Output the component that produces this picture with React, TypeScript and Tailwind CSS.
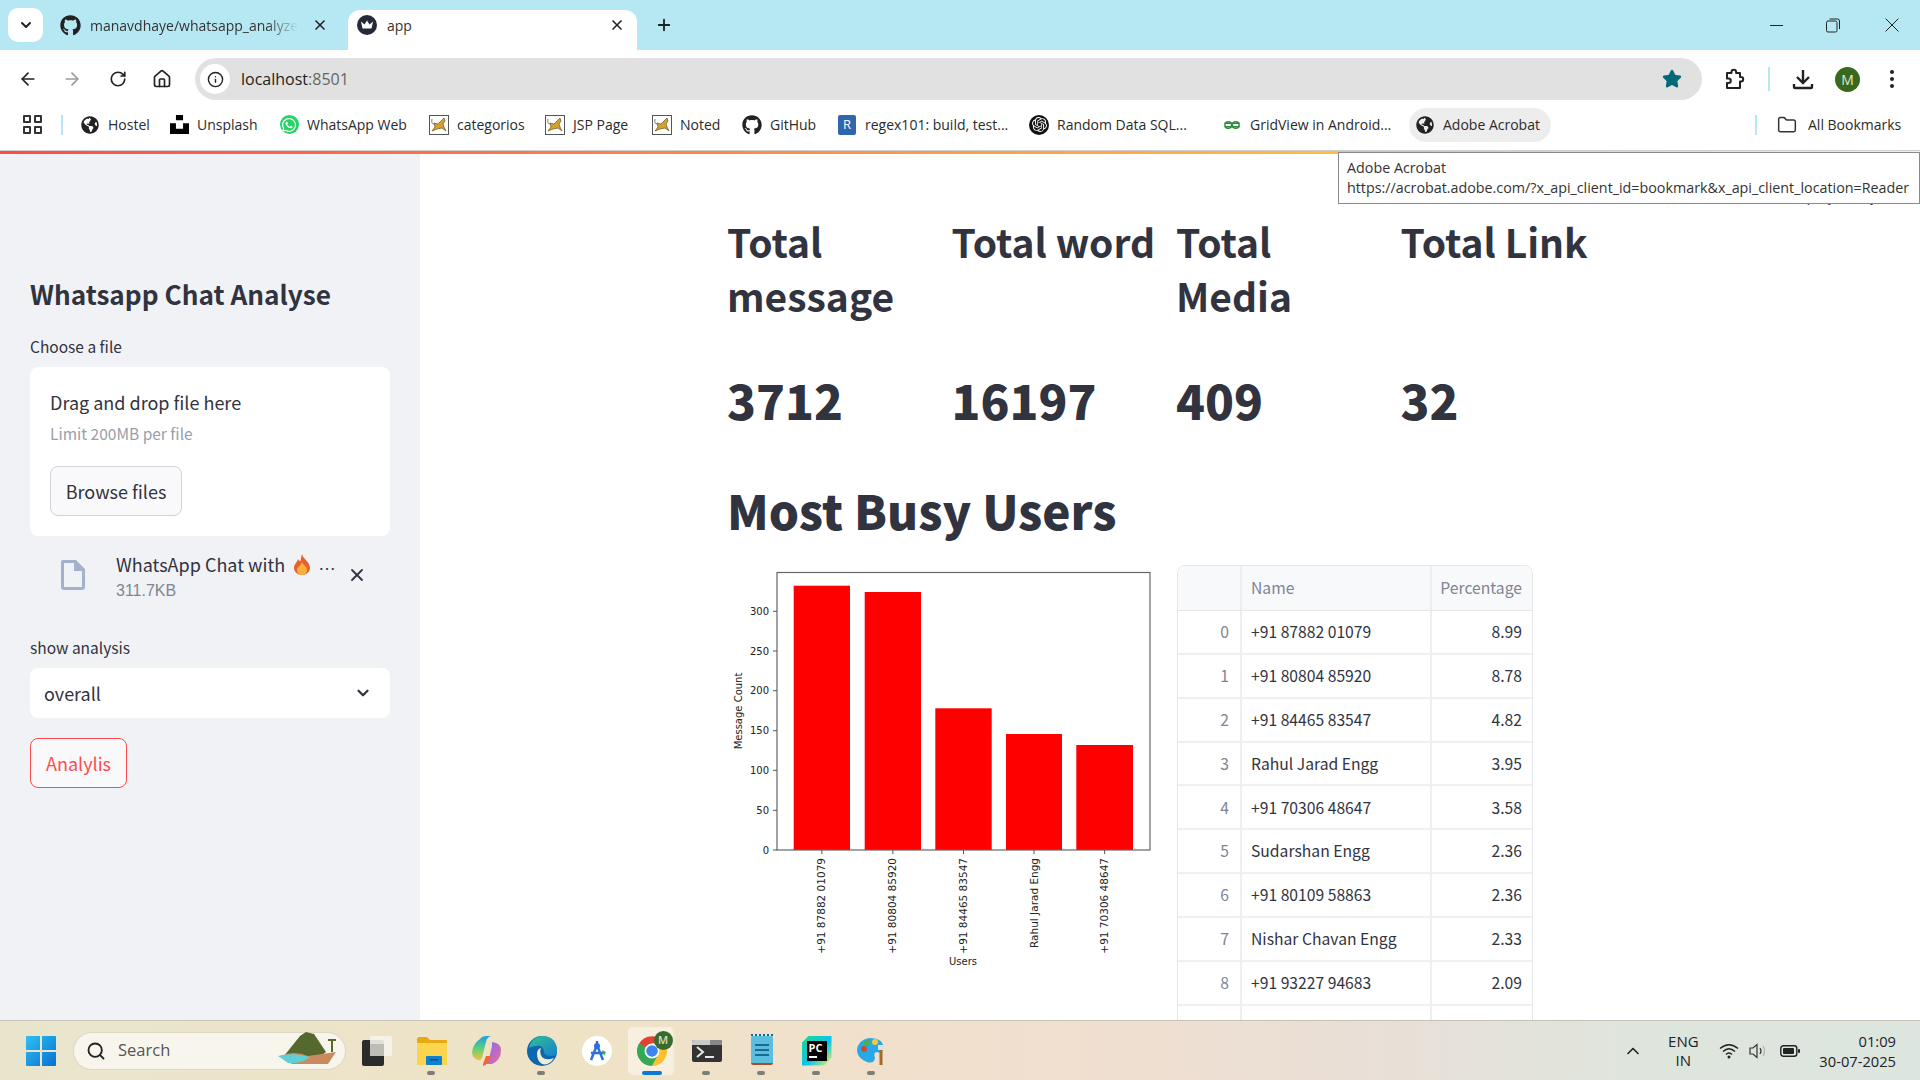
import { ArrowLeft, ArrowRight, RotateCw, House, Info, Star, X, ChevronDown, ChevronUp, Plus, Folder, Search } from "lucide-react";
import { FaGithub, FaGlobeAmericas, FaWhatsapp } from "react-icons/fa";
import { SiUnsplash, SiOpenai } from "react-icons/si";

const st = "font-['Noto_Sans_CJK_SC','Noto_Sans',sans-serif]";
const ui = "font-['Open_Sans','Noto_Sans',sans-serif]";

function Crown() {
  return (
    <svg width="20" height="20" viewBox="0 0 20 20">
      <circle cx="10" cy="10" r="10" fill="#252a3a" />
      <path d="M4 6.5 L7.5 9.5 L10 5.5 L12.500 9.500 L16 6.500 L14.500 13.500 L5.500 13.500Z" fill="#fff" />
    </svg>
  );
}

function Tomcat() {
  return (
    <svg width="20" height="20" viewBox="0 0 20 20">
      <rect x="0.500" y="0.500" width="19" height="19" fill="#fff" stroke="#555" />
      <path d="M3 16 L6 12 L5 8 L9 9 L13 5 L15 3 L16 6 L14 9 L15 12 L17 16 L13 13 L8 14Z" fill="#d4a02f" stroke="#6b5320" strokeWidth="0.700" />
      <path d="M3 4 Q2 9 5 9" fill="none" stroke="#777" />
    </svg>
  );
}

function Bookmark({ w, icon, label, extra = "" }: { w: string; icon: React.ReactNode; label: string; extra?: string }) {
  return (
    <div className={`flex items-center gap-[8px] shrink-0 ${w} ${extra}`}>
      <span className="w-[20px] h-[20px] flex items-center justify-center shrink-0">{icon}</span>
      <span className="text-[14px] text-[#2b2b2b] whitespace-nowrap">{label}</span>
    </div>
  );
}

function TabBar() {
  return (
    <div className={`h-[50px] bg-[#b6e8f4] flex items-stretch shrink-0 relative ${ui}`}>
      <div className="ml-[8px] mt-[8px] w-[35px] h-[34px] bg-white rounded-[10px] flex items-center justify-center">
        <ChevronDown size={16} strokeWidth={3} className="text-[#222]" />
      </div>
      <div className="flex items-center w-[305px] pl-[17px] shrink-0">
        <FaGithub size={21} className="text-[#222]" />
        <span className="ml-[9px] w-[208px] overflow-hidden whitespace-nowrap text-[14px] text-[#333] [mask-image:linear-gradient(to_right,black_85%,transparent)]">manavdhaye/whatsapp_analyzer</span>
        <X size={16} strokeWidth={2.500} className="ml-[14px] text-[#222]" />
      </div>
      <div className="mt-[10px] w-[289px] bg-white rounded-t-[12px] flex items-center pl-[9px] pb-[10px] shrink-0 relative">
        <Crown />
        <span className="ml-[10px] text-[14px] text-[#333] flex-1">app</span>
        <X size={16} strokeWidth={2.500} className="mr-[12px] text-[#222]" />
      </div>
      <div className="ml-[18px] flex items-center">
        <Plus size={18} strokeWidth={2.500} className="text-[#222]" />
      </div>
      <div className="ml-auto flex items-center pr-[21px]">
        <div className="w-[13px] h-[1px] bg-[#222]" />
        <svg width="14" height="15" viewBox="0 0 14 15" fill="none" stroke="#222" className="ml-[43px]"><rect x="0.500" y="3" width="10.500" height="11" rx="1.500" /><path d="M3.500 1 H11.500 Q13.500 1 13.500 3 V11" /></svg>
        <svg width="14" height="14" viewBox="0 0 14 14" stroke="#222" className="ml-[45px]"><path d="M0.500 0.500 L13.500 13.500 M13.500 0.500 L0.500 13.500" /></svg>
      </div>
    </div>
  );
}

function Toolbar() {
  return (
    <div className={`h-[50px] pt-[8px] bg-white rounded-t-[10px] flex items-center shrink-0 relative ${ui}`}>
      <div className="w-[195px] flex items-center shrink-0 text-[#222]">
        <ArrowLeft size={20} strokeWidth={2} className="ml-[18px]" />
        <ArrowRight size={20} strokeWidth={2} className="ml-[24px] text-[#9a9a9a]" />
        <RotateCw size={18} strokeWidth={2.200} className="ml-[27px]" />
        <House size={20} strokeWidth={2} className="ml-[25px]" />
      </div>
      <div className="w-[1507px] h-[42px] bg-[#e1e1e1] rounded-full flex items-center pl-[5px] pr-[20px]">
        <div className="w-[30px] h-[30px] bg-white rounded-full flex items-center justify-center">
          <Info size={17} strokeWidth={2} className="text-[#222]" />
        </div>
        <span className="ml-[11px] text-[16px] text-[#222]">localhost<span className="text-[#666]">:8501</span></span>
        <Star size={20} fill="#006a7a" stroke="#006a7a" className="ml-auto" />
      </div>
      <div className="flex items-center flex-1 text-[#222] pl-[22px]">
        <svg width="21" height="22" viewBox="0 0 21 22" fill="none" stroke="#222" strokeWidth="2" strokeLinejoin="round">
          <path d="M3 5 H7.500 V4 a2.300 2.300 0 0 1 4.600 0 V5 H16 V9 H17 a2.200 2.200 0 0 1 0 4.400 H16 V20 H3 V15 H4.500 a2.300 2.300 0 0 0 0 -4.600 H3 Z" />
        </svg>
        <div className="ml-[23px] w-[2px] h-[24px] bg-[#b6e8f4]" />
        <svg width="22" height="22" viewBox="0 0 22 22" fill="none" stroke="#222" strokeWidth="2.400" className="ml-[22px]">
          <path d="M11 2 V14 M5 9 L11 15 L17 9" />
          <path d="M2 16 V19 Q2 20 3 20 H19 Q20 20 20 19 V16" />
        </svg>
        <div className="ml-[21px] w-[25px] h-[25px] rounded-full bg-[#38691f] text-[#e0e8d8] text-[14px] flex items-center justify-center">M</div>
        <svg width="4" height="20" viewBox="0 0 4 20" className="ml-[30px]" fill="#222"><circle cx="2" cy="3" r="2" /><circle cx="2" cy="10" r="2" /><circle cx="2" cy="17" r="2" /></svg>
      </div>
    </div>
  );
}

function BookmarksBar() {
  return (
    <div className={`h-[51px] pb-[1px] bg-white flex items-center shrink-0 border-b border-[#cfcfcf] ${ui}`}>
      <div className="ml-[23px] grid grid-cols-2 gap-[3px] shrink-0">
        <div className="w-[8px] h-[8px] border-2 border-[#333] rounded-[1px]" />
        <div className="w-[8px] h-[8px] border-2 border-[#333] rounded-[1px]" />
        <div className="w-[8px] h-[8px] border-2 border-[#333] rounded-[1px]" />
        <div className="w-[8px] h-[8px] border-2 border-[#333] rounded-[1px]" />
      </div>
      <div className="ml-[19px] mr-[17px] w-[2px] h-[20px] bg-[#b6e8f4] shrink-0" />
      <Bookmark w="w-[89px]" icon={<FaGlobeAmericas size={18} className="text-[#222]" />} label="Hostel" />
      <Bookmark w="w-[110px]" icon={<SiUnsplash size={19} className="text-black" />} label="Unsplash" />
      <Bookmark w="w-[150px]" icon={<span className="w-[19px] h-[19px] rounded-full bg-[#25d366] flex items-center justify-center"><FaWhatsapp size={16} className="text-white" /></span>} label="WhatsApp Web" />
      <Bookmark w="w-[116px]" icon={<Tomcat />} label="categorios" />
      <Bookmark w="w-[107px]" icon={<Tomcat />} label="JSP Page" />
      <Bookmark w="w-[90px]" icon={<Tomcat />} label="Noted" />
      <Bookmark w="w-[95px]" icon={<FaGithub size={20} className="text-[#222]" />} label="GitHub" />
      <Bookmark w="w-[192px]" icon={<span className="w-[18px] h-[20px] bg-[#2f66ad] text-white text-[13px] flex items-center justify-center rounded-[2px]">R</span>} label="regex101: build, test..." />
      <Bookmark w="w-[193px]" icon={<span className="w-[20px] h-[20px] rounded-full bg-[#111] flex items-center justify-center"><SiOpenai size={15} className="text-white" /></span>} label="Random Data SQL..." />
      <Bookmark w="w-[187px]" icon={<svg width="18" height="10" viewBox="0 0 20 12" fill="none" stroke="#2e8b3d" strokeWidth="1.800"><path d="M1 4 H19 M1 8 H19" /><circle cx="5.500" cy="6" r="4" /><circle cx="14.500" cy="6" r="4" /></svg>} label="GridView in Android..." />
      <Bookmark w="w-[142px]" extra="h-[34px] bg-[#ededed] rounded-full pl-[6px]" icon={<FaGlobeAmericas size={18} className="text-[#222]" />} label="Adobe Acrobat" />
      <div className="ml-[204px] w-[2px] h-[20px] bg-[#b6e8f4] shrink-0" />
      <Folder size={20} strokeWidth={1.800} className="ml-[20px] text-[#333] shrink-0" />
      <span className="ml-[11px] text-[14px] text-[#2b2b2b] whitespace-nowrap">All Bookmarks</span>
    </div>
  );
}

function Sidebar() {
  return (
    <aside className={`w-[420px] shrink-0 bg-[#f0f2f6] px-[30px] pt-[121px] text-[#31333f] ${st}`}>
      <h2 className="text-[26.200px] leading-[38px] font-semibold">Whatsapp Chat Analyse</h2>
      <p className="mt-[23px] text-[15.500px] leading-[20px]">Choose a file</p>
      <div className="mt-[11px] h-[169px] bg-white rounded-[8px] pl-[20px] pt-[22px]">
        <p className="text-[18px] leading-[26px]">Drag and drop file here</p>
        <p className="mt-[8px] text-[15.500px] leading-[20px] text-[#9a9ea8]">Limit 200MB per file</p>
        <button className="mt-[23px] w-[132px] h-[50px] bg-[#f9f9fb] border border-[#d2d3d6] rounded-[8px] text-[18px]">Browse files</button>
      </div>
      <div className="h-[78px] flex items-center pl-[31px] relative">
        <svg width="24" height="30" viewBox="0 0 24 30" fill="none"><path d="M2 0 H15 L24 9 V27 Q24 30 21 30 H3 Q0 30 0 27 V2 Q0 0 2 0Z M3 3 V27 H21 V11 H13 V3Z" fill="#a3b2cc" fillRule="evenodd" /><path d="M15 1 V9 H23Z" fill="#a3b2cc" /></svg>
        <div className="ml-[31px] mt-[5px]">
          <div className="flex items-center text-[18px] leading-[26px] w-[220px] whitespace-nowrap -mt-[1px]">WhatsApp Chat with <span className="ml-[9px] mr-[8px] inline-flex"><svg width="16" height="21" viewBox="0 0 16 21"><path d="M8 0 C9 5 16 8 16 14 C16 18 12 21 8 21 C4 21 0 18 0 14 C0 10 3 9 4 5 C5 7 6 7 6.500 7 C7 5 7 3 8 0Z" fill="#e8612c" /><path d="M8 8 C9 11 13 12 13 16 C13 19 10 21 8 21 C6 21 3 19 3 16 C3 13 7 12 8 8Z" fill="#fbb03b" /></svg></span><span className="font-['Liberation_Sans',sans-serif]">…</span></div>
          <div className="text-[16px] leading-[24px] text-[#808495] font-['Liberation_Sans',sans-serif] mt-[2px]">311.7KB</div>
        </div>
        <X size={20} strokeWidth={2.200} className="absolute left-[317px] top-[29px] text-[#31333f]" />
      </div>
      <p className="mt-[23px] text-[15.500px] leading-[20px]">show analysis</p>
      <div className="mt-[11px] h-[50px] bg-white rounded-[8px] flex items-center pl-[14px] pr-[18px] justify-between">
        <span className="text-[18px]">overall</span>
        <ChevronDown size={18} strokeWidth={3} />
      </div>
      <button className="mt-[20px] w-[97px] h-[50px] bg-[#f9f9fb] border border-[#ff4b4b] rounded-[8px] text-[18px] text-[#ff4b4b]">Analylis</button>
    </aside>
  );
}

const metrics = [
  { t: "Total message", v: "3712" },
  { t: "Total word", v: "16197" },
  { t: "Total Media", v: "409" },
  { t: "Total Link", v: "32" },
];

const rows = [
  ["0", "+91 87882 01079", "8.99"],
  ["1", "+91 80804 85920", "8.78"],
  ["2", "+91 84465 83547", "4.82"],
  ["3", "Rahul Jarad Engg", "3.95"],
  ["4", "+91 70306 48647", "3.58"],
  ["5", "Sudarshan Engg", "2.36"],
  ["6", "+91 80109 58863", "2.36"],
  ["7", "Nishar Chavan Engg", "2.33"],
  ["8", "+91 93227 94683", "2.09"],
  ["", "", ""],
];

function Chart() {
  const xs = [
    [793.7, 56.3, 585.7, "+91 87882 01079"],
    [864.7, 56.3, 592, "+91 80804 85920"],
    [935.3, 56.4, 708.3, "+91 84465 83547"],
    [1006, 56, 734, "Rahul Jarad Engg"],
    [1076.3, 56.7, 745, "+91 70306 48647"],
  ] as const;
  const ticks = [[0, 850], [50, 810.3], [100, 770.3], [150, 730.7], [200, 690.7], [250, 651], [300, 611.3]];
  return (
    <svg viewBox="727 565 433 440" className="w-[433px] h-[440px] font-['DejaVu_Sans',sans-serif]">
      {xs.map(([x, w, top]) => (
        <rect key={x} x={x} y={top} width={w} height={850 - top} fill="#ff0000" />
      ))}
      <rect x="777" y="572.500" width="373" height="277.500" fill="none" stroke="#666" strokeWidth="1.200" />
      {ticks.map(([n, y]) => (
        <g key={n}>
          <line x1="773" x2="777" y1={y} y2={y} stroke="#555" />
          <text x="769" y={y + 3.500} textAnchor="end" fontSize="10" fill="#222">{n}</text>
        </g>
      ))}
      {xs.map(([x, w, , name]) => {
        const c = x + w / 2;
        return (
          <g key={name}>
            <line x1={c} x2={c} y1="850" y2="854" stroke="#555" />
            <text transform={`translate(${c + 3.500} 858) rotate(-90)`} textAnchor="end" fontSize="10.500" fill="#222">{name}</text>
          </g>
        );
      })}
      <text x="963" y="965" textAnchor="middle" fontSize="10" fill="#222">Users</text>
      <text transform="translate(742 711) rotate(-90)" textAnchor="middle" fontSize="10" fill="#222">Message Count</text>
    </svg>
  );
}

function DataTable() {
  return (
    <div className="w-[356px] border border-[#e6e7ea] rounded-t-[8px] overflow-hidden text-[15.700px]">
      <div className="flex h-[45px] bg-[#f8f9fb] border-b border-[#e6e7ea] text-[#808495]">
        <div className="w-[64px] border-r-2 border-[#eceef0]" />
        <div className="w-[190px] border-r-2 border-[#eceef0] pl-[9px] flex items-center">Name</div>
        <div className="flex-1 pr-[10px] flex items-center justify-end">Percentage</div>
      </div>
      {rows.map((r, i) => (
        <div key={i} className="flex h-[43.850px] border-b-2 border-[#eef0f2]">
          <div className="w-[64px] border-r-2 border-[#eceef0] pr-[11px] flex items-center justify-end text-[#808495]">{r[0]}</div>
          <div className="w-[190px] border-r-2 border-[#eceef0] pl-[9px] flex items-center text-[#31333f] whitespace-nowrap">{r[1]}</div>
          <div className="flex-1 pr-[10px] flex items-center justify-end text-[#31333f]">{r[2]}</div>
        </div>
      ))}
    </div>
  );
}

function Main() {
  return (
    <main className={`flex-1 bg-white overflow-hidden relative pl-[307px] pt-[60px] text-[#31333f] ${st}`}>
      <div className="absolute left-[1369px] top-[31px] text-[14px] leading-[20px] text-[#31333f]">Deploy</div>
      <div className="absolute left-[1450px] top-[48px] w-[3px] h-[3px] rounded-full bg-[#31333f]" />
      <div className="w-[882px] grid grid-cols-4 gap-x-[16px]">
        {metrics.map((m) => (
          <h3 key={m.t} className="text-[39px] leading-[54px] font-semibold h-[108px]">{m.t}</h3>
        ))}
      </div>
      <div className="mt-[48px] w-[882px] grid grid-cols-4 gap-x-[16px]">
        {metrics.map((m) => (
          <div key={m.t} className="text-[47.600px] leading-[60px] font-black">{m.v}</div>
        ))}
      </div>
      <h1 className="mt-[50px] text-[47.600px] leading-[60px] font-black whitespace-nowrap">Most Busy Users</h1>
      <div className="mt-[25px] w-[883px] grid grid-cols-[433px_356px] gap-x-[17px]">
        <Chart />
        <DataTable />
      </div>
    </main>
  );
}

function Tooltip() {
  return (
    <div className={`absolute left-[1338px] top-[152px] w-[582px] h-[52px] bg-white border border-[#8a8a8a] pl-[8px] pt-[5px] text-[14.300px] leading-[20px] text-[#333] whitespace-nowrap ${ui}`}>
      <div>Adobe Acrobat</div>
      <div>https://acrobat.adobe.com/?x_api_client_id=bookmark&amp;x_api_client_location=Reader</div>
    </div>
  );
}

function TaskIcon({ children, dot = false, active = false }: { children: React.ReactNode; dot?: boolean; active?: boolean }) {
  return (
    <div className="w-[55px] h-[60px] flex items-center justify-center relative shrink-0">
      {active && <div className="absolute left-[4px] top-[6px] w-[47px] h-[48px] bg-[#f7f0e0] rounded-[5px] border-r-2 border-[#f1e8d2]" />}
      <div className="relative">{children}</div>
      {dot && <div className="absolute left-[23px] bottom-[6px] w-[8px] h-[4px] rounded-full bg-[#7d7d78]" />}
      {active && <div className="absolute left-[18px] bottom-[6px] w-[20px] h-[4px] rounded-full bg-[#0a78d4]" />}
    </div>
  );
}

function Taskbar() {
  return (
    <div className={`h-[60px] shrink-0 border-t border-[#c4c3b5] bg-[linear-gradient(to_right,#e9e5cd,#efe3c6_30%,#f1dfcf_55%,#eadfd6_70%,#dfe5dd_85%,#dde5e0)] flex items-center relative text-[#222] ${ui}`}>
      <svg width="30" height="30" viewBox="0 0 30 30" className="ml-[26px] shrink-0">
        <defs><linearGradient id="win" x1="0" y1="0" x2="1" y2="1"><stop offset="0" stopColor="#2cc2f2" /><stop offset="1" stopColor="#0a6fd0" /></linearGradient></defs>
        <path d="M1 0 H14 V14 H0 V1Q0 0 1 0Z M16 0 H29 Q30 0 30 1 V14 H16Z M0 16 H14 V30 H1 Q0 30 0 29Z M16 16 H30 V29 Q30 30 29 30 H16Z" fill="url(#win)" />
      </svg>
      <div className="ml-[17px] w-[273px] h-[38px] rounded-full bg-[#f8f5ec] border border-[#dcd8c4] flex items-center relative shrink-0">
        <Search size={20} strokeWidth={2.200} className="ml-[12px] text-[#222]" />
        <span className="ml-[12px] text-[16.500px] text-[#555]">Search</span>
        <svg width="62" height="34" viewBox="0 0 62 34" className="absolute right-[5px] -top-[3px]">
          <path d="M6 26 L22 6 L28 2 L36 4 L48 22 L40 28Z" fill="#55682e" />
          <path d="M2 26 Q16 20 30 26 L58 22 L50 34 H14Z" fill="#c98b5e" />
          <path d="M0 26 Q16 22 32 27 Q24 34 10 33Z" fill="#5fd0d6" />
          <path d="M54 22 V10 M50 10 H58" stroke="#59692a" strokeWidth="2" />
        </svg>
      </div>
      <div className="flex ml-[3px]">
        <TaskIcon>
          <div className="w-[30px] h-[30px] relative">
            <div className="absolute left-0 bottom-0 w-[22px] h-[26px] rounded-[2px] bg-[#2b2b2b]" />
            <div className="absolute right-0 top-0 w-[22px] h-[20px] rounded-[2px] bg-[#f5f3ea]/90" />
            <div className="absolute left-[8px] top-[8px] w-[14px] h-[12px] bg-[#bdbcb5]" />
          </div>
        </TaskIcon>
        <TaskIcon dot>
          <svg width="30" height="28" viewBox="0 0 30 28">
            <path d="M0 2 Q0 0 2 0 H10 L13 3 H30 V28 H0Z" fill="#e8a913" />
            <path d="M0 6 H30 V28 H0Z" fill="#fcd54f" />
            <rect x="9" y="19" width="16" height="9" rx="1" fill="#0f80d0" />
            <rect x="13" y="22" width="8" height="1.500" fill="#0b4f8a" />
          </svg>
        </TaskIcon>
        <TaskIcon>
          <svg width="30" height="30" viewBox="0 0 30 30">
            <defs>
              <linearGradient id="cp1" x1="0" y1="0" x2="0" y2="1"><stop offset="0" stopColor="#1e9be8" /><stop offset="0.500" stopColor="#5bd07a" /><stop offset="1" stopColor="#f8c23a" /></linearGradient>
              <linearGradient id="cp2" x1="0" y1="0" x2="1" y2="1"><stop offset="0" stopColor="#7b6cf0" /><stop offset="1" stopColor="#f06a9e" /></linearGradient>
            </defs>
            <path d="M8 3 Q10 0 15 0 H19 Q15 1 14 6 L10 22 Q9 25 6 24 Q0 22 0 16 Q1 8 8 3Z" fill="url(#cp1)" />
            <path d="M20 6 Q29 7 29 14 Q29 24 20 28 H13 Q16 27 17 23 L20 10Z" fill="url(#cp2)" />
            <path d="M11 30 Q17 28 19 20 L14 20 L11 28Z" fill="#f0663a" />
          </svg>
        </TaskIcon>
        <TaskIcon dot>
          <svg width="30" height="30" viewBox="0 0 30 30">
            <defs><linearGradient id="ed" x1="0" y1="0" x2="1" y2="1"><stop offset="0" stopColor="#2fc38d" /><stop offset="1" stopColor="#1a7fd0" /></linearGradient></defs>
            <circle cx="15" cy="15" r="15" fill="#0c67b0" />
            <path d="M2 12 Q5 0 16 0 Q30 1 30 15 Q30 20 25 20 Q16 20 17 15 Q16 9 9 10 Q5 10 2 12Z" fill="url(#ed)" />
            <path d="M10 18 Q10 13 14 12 Q12 16 15 21 Q19 25 27 22 Q22 30 15 28 Q10 25 10 18Z" fill="#f2ead2" />
          </svg>
        </TaskIcon>
        <TaskIcon>
          <svg width="30" height="30" viewBox="0 0 30 30">
            <circle cx="15" cy="15" r="15" fill="#fff" />
            <path d="M15 5 V10 M9 24 L15 9 L21 24 M9 17 H21" fill="none" stroke="#2f6fd8" strokeWidth="2.500" />
            <circle cx="15" cy="10" r="3" fill="#2f6fd8" />
            <path d="M20 14 L24 16 L22 20Z" fill="#3aa85c" />
          </svg>
        </TaskIcon>
        <TaskIcon active>
          <div className="relative w-[30px] h-[30px]">
            <svg width="30" height="30" viewBox="0 0 30 30">
              <path d="M15 15 L2 8 A15 15 0 0 1 28 7.500 L15 7.500Z" fill="#e34133" />
              <path d="M2 7.500 A15 15 0 0 0 15 30 L21.500 18.700 L15 15 Z" fill="#34a853" />
              <path d="M28 7.500 A15 15 0 0 1 15 30 L21.500 18.700 L15 7.500Z" fill="#fbc02d" />
              <circle cx="15" cy="15" r="7.500" fill="#fff" />
              <circle cx="15" cy="15" r="5.800" fill="#3f83f0" />
            </svg>
            <div className="absolute -right-[6px] -top-[5px] w-[19px] h-[19px] rounded-full bg-[#3c6a2b] text-[#cfe0c3] text-[11px] font-semibold flex items-center justify-center">M</div>
          </div>
        </TaskIcon>
        <TaskIcon dot>
          <div className="w-[30px] h-[22px] rounded-[2px] bg-[#333] overflow-hidden relative">
            <div className="h-[5px] bg-[#c9c9c9] w-[18px]" />
            <div className="absolute right-0 top-0 h-[5px] w-[12px] bg-[#888]" />
            <svg width="30" height="17" viewBox="0 0 30 17" className="absolute left-0 top-[5px]"><path d="M5 2 L11 7 L5 12" fill="none" stroke="#e8e8e8" strokeWidth="2" /><path d="M13 12 H22" stroke="#e8e8e8" strokeWidth="2" /></svg>
          </div>
        </TaskIcon>
        <TaskIcon dot>
          <div className="w-[22px] h-[29px] bg-[#5bbde0] rounded-[2px] border-b-2 border-[#a2501e] flex flex-col items-center justify-center gap-[3px] relative">
            <div className="w-[14px] h-[2px] bg-[#1d6a91]" />
            <div className="w-[14px] h-[2px] bg-[#1d6a91]" />
            <div className="w-[14px] h-[2px] bg-[#1d6a91]" />
            <div className="absolute -top-[2px] left-0 right-0 h-[3px] border-t-2 border-dotted border-[#0f6a8e]" />
          </div>
        </TaskIcon>
        <TaskIcon dot>
          <div className="w-[30px] h-[30px] relative bg-[linear-gradient(135deg,#21d789,#07c3f2_55%,#fcf84a)] [clip-path:polygon(25%_0,100%_0,100%_75%,75%_100%,0_100%,0_25%)]">
            <div className="absolute left-[5px] top-[5px] w-[20px] h-[20px] bg-black text-white text-[11px] leading-[12px] font-bold pl-[2px] pt-[1px]">PC
              <div className="w-[8px] h-[2px] bg-white mt-[2px]" />
            </div>
          </div>
        </TaskIcon>
        <TaskIcon dot>
          <svg width="30" height="30" viewBox="0 0 30 30">
            <path d="M12 2 Q28 2 26 14 Q24 18 20 16 Q16 16 18 22 Q17 28 10 26 Q0 22 0 14 Q1 4 12 2Z" fill="#29a8e8" />
            <circle cx="7" cy="13" r="3" fill="#c94f2c" />
            <circle cx="10" cy="7" r="3" fill="#4caf50" />
            <circle cx="18" cy="6" r="3" fill="#f6c63b" />
            <path d="M24 12 V29" stroke="#a06a2a" strokeWidth="3" />
            <rect x="21" y="9" width="6" height="5" fill="#e0e0e0" />
          </svg>
        </TaskIcon>
      </div>
      <div className="ml-auto flex items-center">
        <ChevronUp size={20} strokeWidth={2} className="text-[#222]" />
        <div className="ml-[15px] w-[50px] text-center text-[15px] leading-[19px]">ENG<br />IN</div>
        <svg width="20" height="16" viewBox="0 0 20 16" fill="none" stroke="#222" strokeWidth="1.400" className="ml-[11px]">
          <path d="M1 5.500 Q10 -2 19 5.500 M4 8.500 Q10 3 16 8.500 M7 11.500 Q10 8.500 13 11.500" />
          <circle cx="10" cy="14" r="1.500" fill="#222" stroke="none" />
        </svg>
        <svg width="20" height="16" viewBox="0 0 20 16" fill="none" stroke="#333" strokeWidth="1.200" className="ml-[10px]">
          <path d="M1 5 H4 L8 1.500 V14.500 L4 11 H1Z" />
          <path d="M11 5 Q13 8 11 11" />
          <path d="M14 3 Q17 8 14 13" stroke="#b0b0a8" />
        </svg>
        <svg width="20" height="12" viewBox="0 0 20 12" className="ml-[11px]">
          <rect x="0.800" y="0.800" width="16" height="10.400" rx="2.500" fill="none" stroke="#222" strokeWidth="1.400" />
          <rect x="3" y="3" width="11" height="6" rx="1" fill="#222" />
          <rect x="18" y="4" width="2" height="4" rx="1" fill="#222" />
        </svg>
        <div className="ml-[19px] mr-[24px] text-right text-[14.700px] leading-[20px]">01:09<br />30-07-2025</div>
      </div>
    </div>
  );
}

export default function App() {
  return (
    <div className="w-[1920px] h-[1080px] flex flex-col overflow-hidden relative bg-white">
      <TabBar />
      <Toolbar />
      <BookmarksBar />
      <div className="h-[3px] shrink-0 bg-[linear-gradient(to_right,#ff4b4b,#ffbd45_70%,#fff3c0)]" />
      <div className="flex-1 flex min-h-0">
        <Sidebar />
        <Main />
      </div>
      <Taskbar />
      <Tooltip />
    </div>
  );
}
